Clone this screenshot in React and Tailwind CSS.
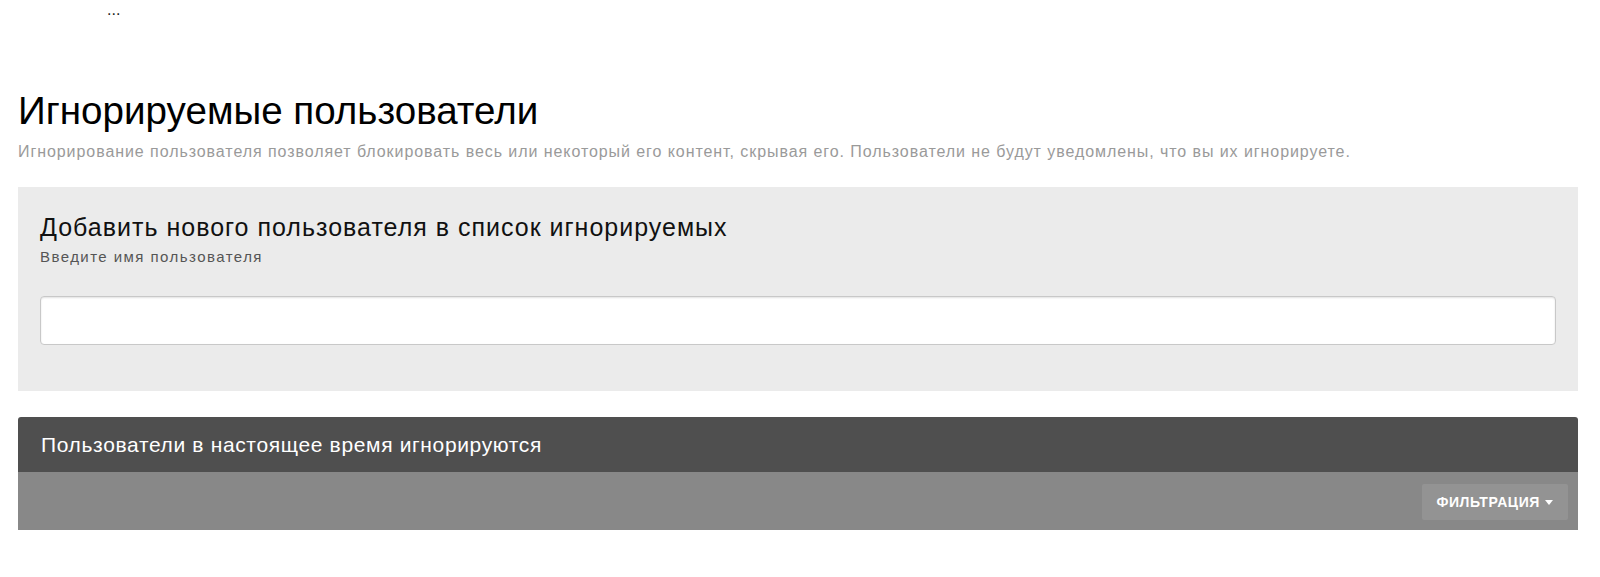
export default function App() {
    return (
        <div className="h-[577px] bg-white pl-[18px] pr-[22px] font-['Liberation_Sans',Arial,sans-serif]">
            <div className="pl-[89px] pt-[1px] text-[16px] leading-[18px] text-[#222]">...</div>

            <h1 className="mt-[70px] text-[38.6px] leading-[44px] font-normal text-black">
                Игнорируемые пользователи
            </h1>
            <p className="mt-[9px] text-[16px] leading-[20px] tracking-[0.93px] text-[#9a9a9a]">
                Игнорирование пользователя позволяет блокировать весь или некоторый его контент, скрывая его. Пользователи не будут уведомлены, что вы их игнорируете.
            </p>

            <div className="mt-[25px] bg-[#ebebeb] px-[22px] pt-[25px] pb-[46px]">
                <h2 className="text-[25px] leading-[30px] tracking-[1px] text-[#111]">
                    Добавить нового пользователя в список игнорируемых
                </h2>
                <div className="mt-[5px] text-[15px] leading-[20px] tracking-[1.45px] text-[#555]">
                    Введите имя пользователя
                </div>
                <input
                    type="text"
                    className="mt-[29px] block h-[49px] w-full rounded-[4px] border border-[#c8c8c8] bg-white px-3 shadow-[inset_0_1px_2px_rgba(0,0,0,0.12)] outline-none"
                />
            </div>

            <div className="mt-[26px]">
                <div className="flex h-[55px] items-center rounded-t-[3px] bg-[#4f4f4f] pl-[23px] text-[21px] tracking-[0.65px] text-white">
                    Пользователи в настоящее время игнорируются
                </div>
                <div className="flex h-[58px] justify-end bg-[#888888] pt-[12px] pr-[10px]">
                    <button className="flex h-[36px] items-center gap-[5px] rounded-[2px] bg-[#939393] pl-[14px] pr-[15px] text-[14px] font-bold tracking-[0.6px] uppercase text-white">
                        Фильтрация
                        <svg width="8" height="5" viewBox="0 0 8 5" className="mt-[1px]">
                            <path d="M0 0h8L4 5z" fill="#fff" />
                        </svg>
                    </button>
                </div>
            </div>
        </div>
    );
}
